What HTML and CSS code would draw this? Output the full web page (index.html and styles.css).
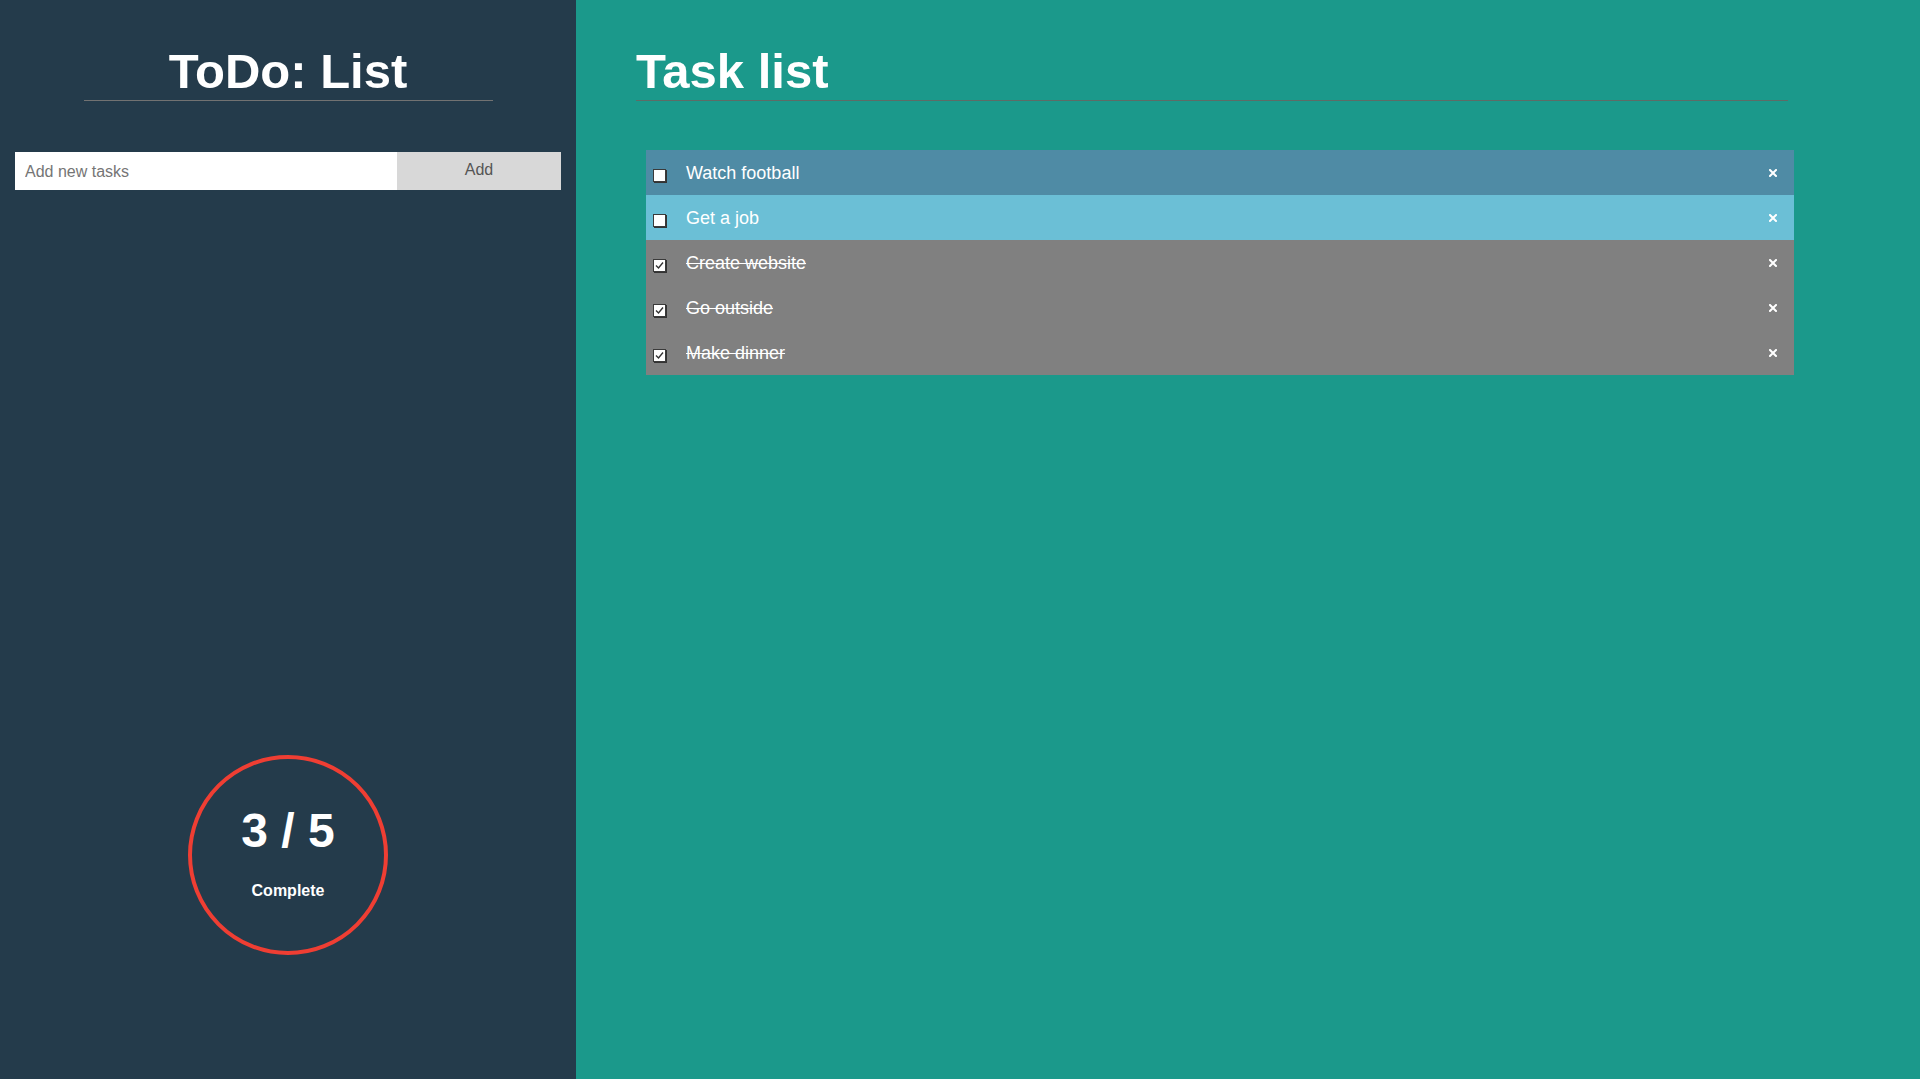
FILE: index.html
```html
<!DOCTYPE html>
<html lang="en">
<head>
<meta charset="utf-8">
<title>ToDo: List</title>
<link rel="stylesheet" href="styles.css">
</head>
<body>
<aside class="sidebar">
  <h1 class="side-title">ToDo: List</h1>
  <form class="add-form">
    <input class="add-input" type="text" placeholder="Add new tasks">
    <button class="add-btn" type="button">Add</button>
  </form>
  <div class="progress">
    <div class="progress-count">3 / 5</div>
    <div class="progress-label">Complete</div>
  </div>
</aside>
<main class="main">
  <h1 class="main-title">Task list</h1>
  <ul class="tasks">
    <li class="task task-a">
      <span class="check"></span>
      <span class="task-text">Watch football</span>
      <span class="remove"><svg width="8" height="8" viewBox="0 0 8 8"><path d="M1 1L7 7M7 1L1 7" stroke="#fff" stroke-width="2" stroke-linecap="square"/></svg></span>
    </li>
    <li class="task task-b">
      <span class="check"></span>
      <span class="task-text">Get a job</span>
      <span class="remove"><svg width="8" height="8" viewBox="0 0 8 8"><path d="M1 1L7 7M7 1L1 7" stroke="#fff" stroke-width="2" stroke-linecap="square"/></svg></span>
    </li>
    <li class="task task-done">
      <span class="check"><svg width="11" height="11" viewBox="0 0 11 11"><path d="M2 5.5L4.5 8L9 2.5" fill="none" stroke="#333" stroke-width="1.4"/></svg></span>
      <span class="task-text">Create website</span>
      <span class="remove"><svg width="8" height="8" viewBox="0 0 8 8"><path d="M1 1L7 7M7 1L1 7" stroke="#fff" stroke-width="2" stroke-linecap="square"/></svg></span>
    </li>
    <li class="task task-done">
      <span class="check"><svg width="11" height="11" viewBox="0 0 11 11"><path d="M2 5.5L4.5 8L9 2.5" fill="none" stroke="#333" stroke-width="1.4"/></svg></span>
      <span class="task-text">Go outside</span>
      <span class="remove"><svg width="8" height="8" viewBox="0 0 8 8"><path d="M1 1L7 7M7 1L1 7" stroke="#fff" stroke-width="2" stroke-linecap="square"/></svg></span>
    </li>
    <li class="task task-done">
      <span class="check"><svg width="11" height="11" viewBox="0 0 11 11"><path d="M2 5.5L4.5 8L9 2.5" fill="none" stroke="#333" stroke-width="1.4"/></svg></span>
      <span class="task-text">Make dinner</span>
      <span class="remove"><svg width="8" height="8" viewBox="0 0 8 8"><path d="M1 1L7 7M7 1L1 7" stroke="#fff" stroke-width="2" stroke-linecap="square"/></svg></span>
    </li>
  </ul>
</main>
</body>
</html>
```

FILE: styles.css
```css
* { box-sizing: border-box; }
html, body {
  margin: 0;
  padding: 0;
  height: 100%;
}
body {
  display: flex;
  font-family: "Liberation Sans", Arial, sans-serif;
  color: #fff;
  overflow: hidden;
}
.sidebar {
  width: 576px;
  flex: 0 0 576px;
  background: #243b4b;
  display: flex;
  flex-direction: column;
  align-items: center;
  height: 100vh;
}
.side-title {
  margin: 42px 0 0;
  width: 409px;
  font-size: 49px;
  line-height: 58px;
  font-weight: bold;
  text-align: center;
  border-bottom: 1px solid #727272;
}
.add-form {
  display: flex;
  width: 546px;
  margin-top: 51px;
  height: 38px;
}
.add-input {
  width: 382px;
  height: 38px;
  border: none;
  outline: none;
  padding: 2px 10px 0;
  font-family: "Liberation Sans", Arial, sans-serif;
  font-size: 16px;
  color: #333;
  background: #fff;
}
.add-input::placeholder { color: #757575; }
.add-btn {
  flex: 1;
  height: 38px;
  border: none;
  background: #d8d8d8;
  color: #555;
  font-family: "Liberation Sans", Arial, sans-serif;
  font-size: 16px;
  padding: 0 0 2px;
}
.progress {
  margin-top: auto;
  margin-bottom: 124px;
  width: 200px;
  height: 200px;
  border: 4px solid #ef3e33;
  border-radius: 50%;
  display: flex;
  flex-direction: column;
  align-items: center;
  padding-top: 44px;
}
.progress-count {
  font-size: 48px;
  line-height: 55px;
  font-weight: bold;
}
.progress-label {
  margin-top: 24px;
  font-size: 16px;
  line-height: 18px;
  font-weight: bold;
}
.main {
  flex: 1;
  background: #1b998b;
  height: 100vh;
  padding-left: 60px;
}
.main-title {
  margin: 42px 0 0;
  width: 1152px;
  font-size: 49px;
  line-height: 58px;
  font-weight: bold;
  border-bottom: 1px solid #5e6b66;
}
.tasks {
  list-style: none;
  margin: 49px 0 0 10px;
  padding: 0;
  width: 1148px;
}
.task {
  display: flex;
  align-items: center;
  height: 45px;
  padding: 0 17px 0 7px;
  font-size: 18px;
  line-height: 45px;
}
.task-a { background: #4f8ba5; }
.task-b { background: #6bbfd6; }
.task-done { background: #808080; }
.task-done .task-text { text-decoration: line-through; }
.check {
  width: 13px;
  height: 13px;
  margin-top: 5px;
  margin-right: 20px;
  background: #fff;
  border: 1px solid #3a3a3a;
  box-shadow: 1px 1px 0 #333;
  display: flex;
  align-items: center;
  justify-content: center;
}
.task-text {
  flex: 1;
  padding-top: 2px;
}
.remove {
  display: flex;
  width: 8px;
  height: 8px;
}
```
